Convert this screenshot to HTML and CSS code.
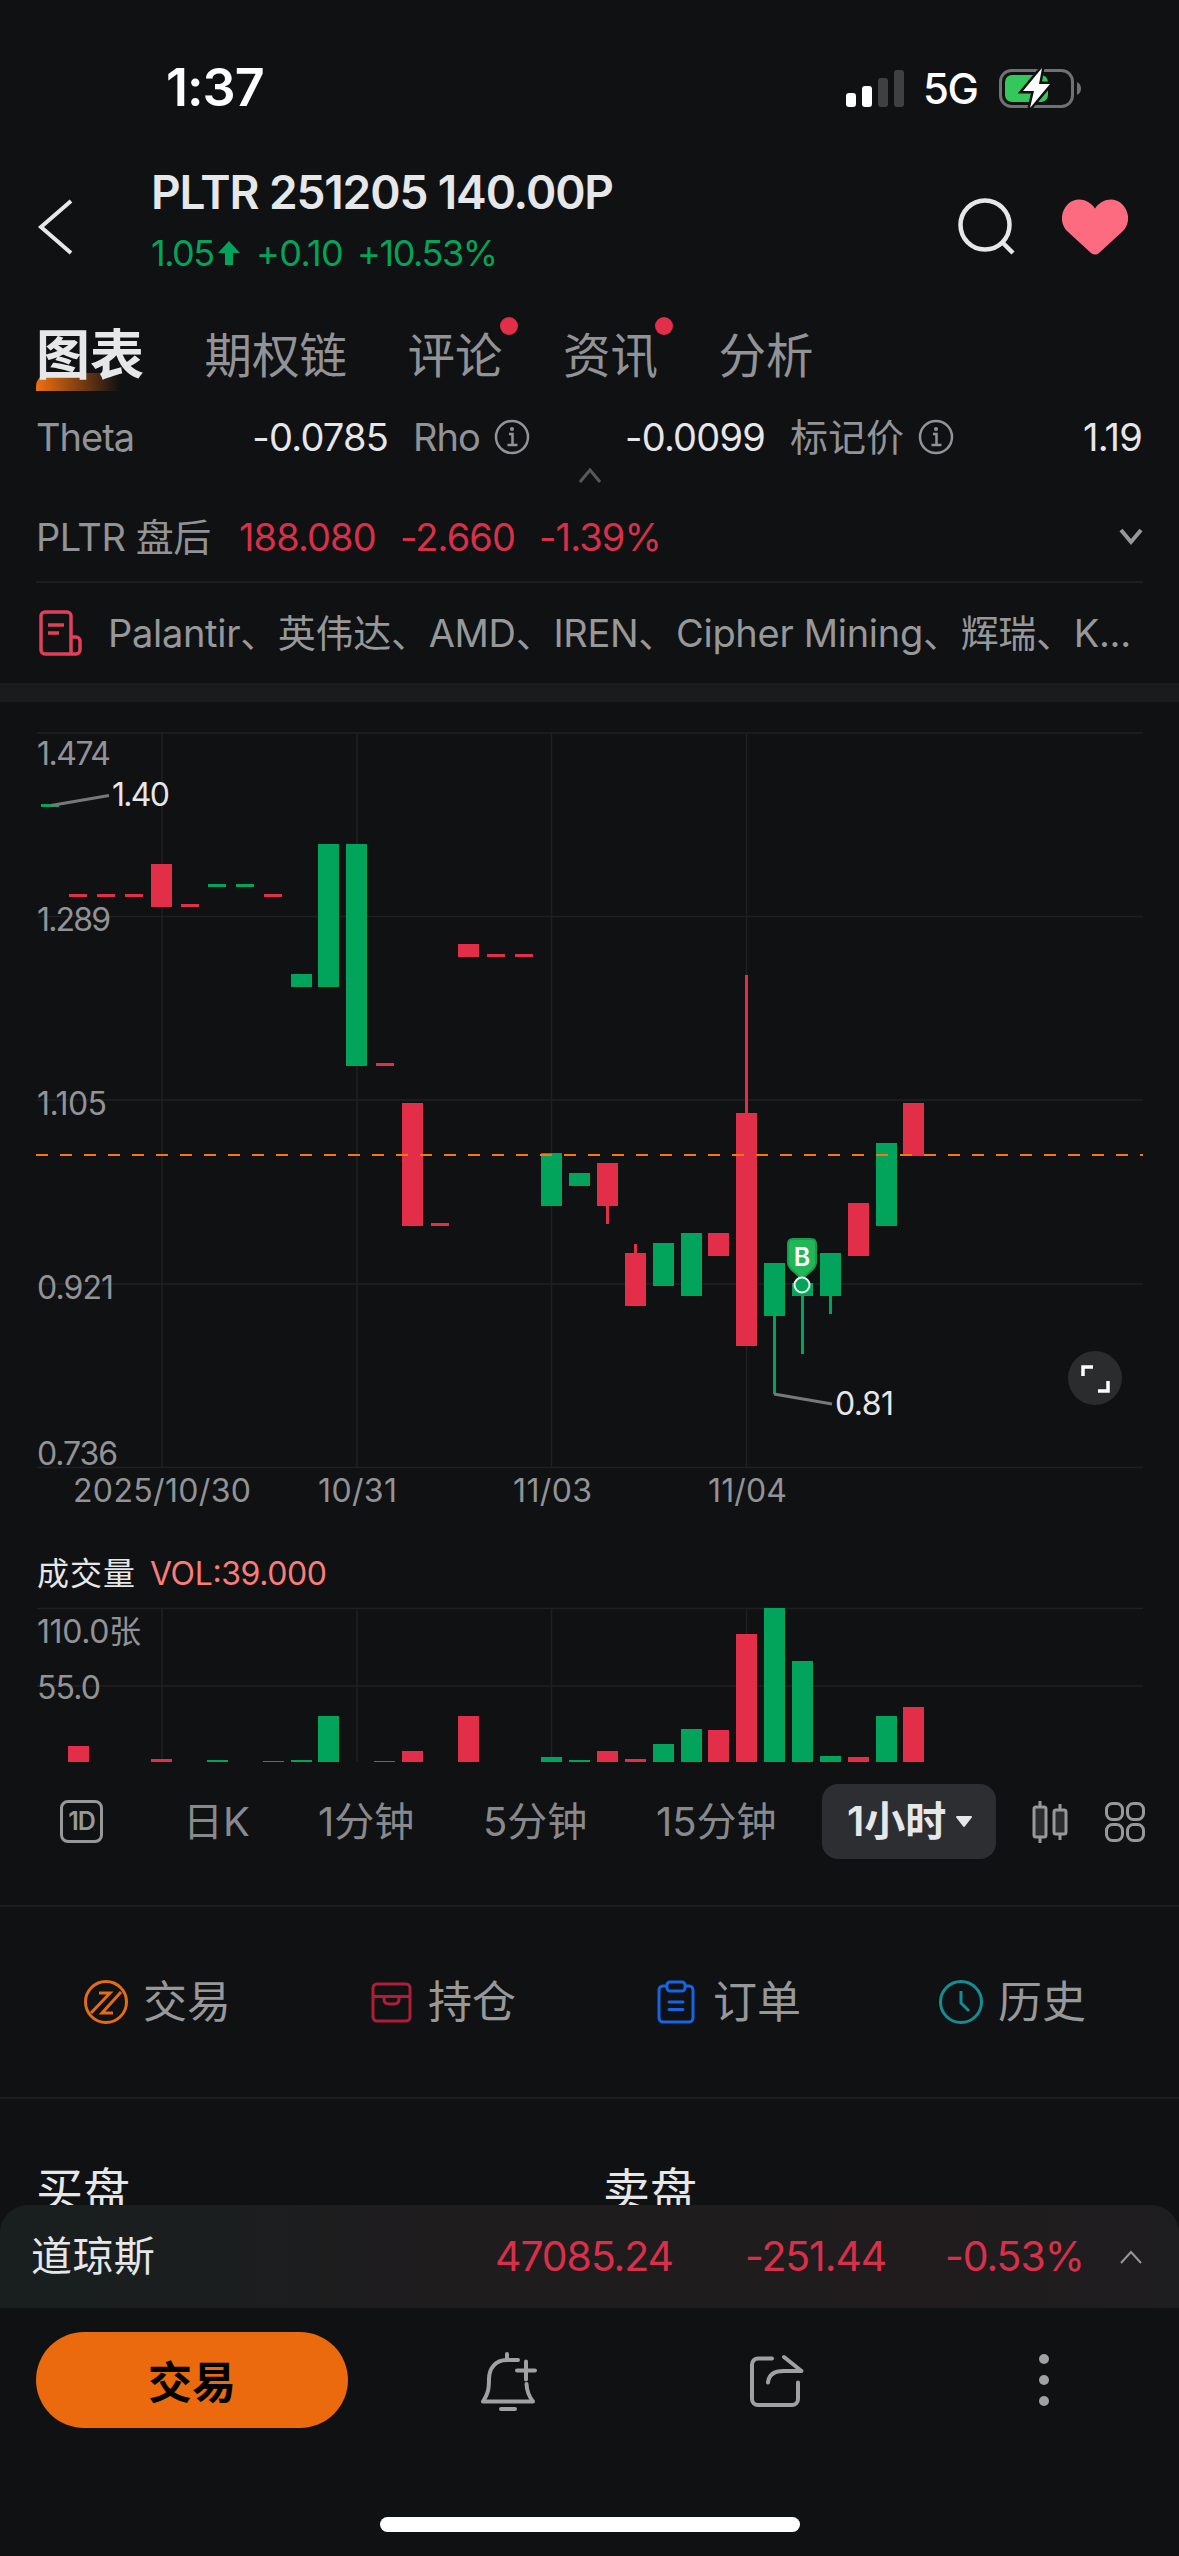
FILE: index.html
```html
<!DOCTYPE html>
<html lang="zh">
<head>
  <meta charset="utf-8">
  <title>PLTR 251205 140.00P</title>
  <link rel="stylesheet" href="styles.css">
</head>
<body>
  <div class="status-bar">
    <span class="time">1:37</span>
    <div class="status-icons">
      <svg width="58" height="38" viewBox="0 0 58 38">
        <rect x="0" y="24" width="10" height="14" rx="3" fill="#fff"/>
        <rect x="16" y="17" width="10" height="21" rx="3" fill="#fff"/>
        <rect x="32" y="9" width="10" height="29" rx="3" fill="#3f4042"/>
        <rect x="48" y="1" width="10" height="37" rx="3" fill="#3f4042"/>
      </svg>
      <span class="network">5G</span>
      <svg width="83" height="44" viewBox="0 0 83 44">
        <rect x="1.5" y="4.5" width="72" height="36" rx="11" fill="none" stroke="#707173" stroke-width="3"/>
        <path d="M78 16q4 2 4 6.500t-4 6.500z" fill="#707173"/>
        <rect x="6" y="9" width="43" height="27" rx="7" fill="#34c759"/>
        <path d="M43 2 L24 25 H35 L31 42 L51 18 H40 Z" fill="#fff" stroke="#101113" stroke-width="5" paint-order="stroke"/>
      </svg>
    </div>
  </div>

  <header class="header">
    <svg class="back" width="40" height="60" viewBox="0 0 40 60"><path d="M35 4 L5 30 L35 56" fill="none" stroke="#e6e7e9" stroke-width="4"/></svg>
    <div class="quote">
      <h1>PLTR 251205 140.00P</h1>
      <p class="change">
        <span class="last">1.05</span>
        <svg width="22" height="24" viewBox="0 0 22 24"><path d="M11 0 L22 12 H15 V24 H7 V12 H0 Z" fill="#02a35a"/></svg>
        <span class="diff">+0.10</span>
        <span class="pct">+10.53%</span>
      </p>
    </div>
    <svg class="search" width="60" height="60" viewBox="0 0 60 60"><circle cx="28" cy="28" r="24.500" fill="none" stroke="#e6e7e9" stroke-width="4.500"/><path d="M45 45 L56 56" stroke="#e6e7e9" stroke-width="4.500"/></svg>
    <svg class="heart" width="66" height="56" viewBox="0 0 66 56"><path d="M33 9.500C26 -1 13-2 6 5C-2 13-2 25 5 32L29 54Q33 57 37 54L61 32C68 25 68 13 60 5C53-2 40-1 33 9.500Z" fill="#fc6b80"/></svg>
  </header>

  <nav class="tabs">
    <a class="tab active">图表</a>
    <a class="tab">期权链</a>
    <a class="tab dot">评论</a>
    <a class="tab dot">资讯</a>
    <a class="tab">分析</a>
  </nav>

  <section class="greeks">
    <div class="greek"><span class="label latin">Theta</span><span class="value">-0.0785</span></div>
    <div class="greek"><span class="label latin">Rho</span>
      <svg class="info" width="36" height="36" viewBox="0 0 36 36"><g fill="none" stroke="#929396" stroke-width="2.500"><circle cx="18" cy="18" r="16"/><path d="M15 15h3.500v11M13.500 26h10"/></g><circle cx="18" cy="10" r="2" fill="#929396"/></svg>
      <span class="value">-0.0099</span></div>
    <div class="greek"><span class="label">标记价</span>
      <svg class="info" width="36" height="36" viewBox="0 0 36 36"><g fill="none" stroke="#929396" stroke-width="2.500"><circle cx="18" cy="18" r="16"/><path d="M15 15h3.500v11M13.500 26h10"/></g><circle cx="18" cy="10" r="2" fill="#929396"/></svg>
      <span class="value">1.19</span></div>
  </section>
  <div class="collapse">
    <svg width="22" height="16" viewBox="0 0 22 16"><path d="M1 14 L11 2 L21 14" fill="none" stroke="#57585a" stroke-width="3"/></svg>
  </div>

  <section class="underlying">
    <span class="label">PLTR 盘后</span>
    <span class="down u-price">188.080</span>
    <span class="down u-diff">-2.660</span>
    <span class="down u-pct">-1.39%</span>
    <svg class="caret" width="24" height="18" viewBox="0 0 24 18"><path d="M2 2 L12 14 L22 2" fill="none" stroke="#97989a" stroke-width="4"/></svg>
  </section>

  <section class="news">
    <svg width="44" height="46" viewBox="0 0 44 46"><g fill="none" stroke="#e0405a" stroke-width="3.500"><path d="M32 44H6a4 4 0 0 1-4-4V6a4 4 0 0 1 4-4H28a4 4 0 0 1 4 4V44H37a4 4 0 0 0 4-4V31a4 4 0 0 0-4-4H32"/><path d="M9 15H25M9 23H20"/></g></svg>
    <p>Palantir、英伟达、AMD、IREN、Cipher Mining、辉瑞、K...</p>
  </section>

  <main class="chart">
    <svg id="chart" width="1179" height="1060" viewBox="0 702 1179 1060">
      <g id="grid" stroke="#1f2022" stroke-width="1.500"></g>
      <g id="candles"></g>
      <g id="volume"></g>
      <path d="M36 1155H1143" stroke="#f5780f" stroke-width="2" stroke-dasharray="12 12"/>
      <g stroke="#77787a" stroke-width="3"><path d="M51 805.500L109 795.500M774 1394L832 1404"/></g>
      <g class="axis">
        <text x="37" y="765" textLength="74">1.474</text>
        <text x="37" y="931" textLength="74">1.289</text>
        <text x="37" y="1115" textLength="70">1.105</text>
        <text x="37" y="1299" textLength="77">0.921</text>
        <text x="37" y="1465" textLength="81">0.736</text>
        <text x="73" y="1502" textLength="178">2025/10/30</text>
        <text x="318" y="1502" textLength="79">10/31</text>
        <text x="513" y="1502" textLength="79">11/03</text>
        <text x="708" y="1502" textLength="79">11/04</text>
        <text x="37" y="1643" textLength="104">110.0张</text>
        <text x="37" y="1699" textLength="64">55.0</text>
      </g>
      <g class="marks">
        <text x="112" y="806" textLength="58">1.40</text>
        <text x="835" y="1415" textLength="59">0.81</text>
      </g>
      <text class="vol-title" x="37" y="1585" textLength="98">成交量</text>
      <text class="vol-value" x="150" y="1585" textLength="177">VOL:39.000</text>
      <path d="M793 1239H811Q816 1239 816 1244V1263Q816 1266 813 1269L802 1279L791 1269Q788 1266 788 1263V1244Q788 1239 793 1239Z" fill="#22b659" stroke="#13a04d" stroke-width="2"/>
      <text class="buy" x="802" y="1266">B</text>
      <circle cx="802" cy="1285" r="7.500" fill="#02a35a" stroke="#e6f6ec" stroke-width="2"/>
      <circle cx="1095" cy="1378" r="27" fill="#2b2c2e"/>
      <path d="M1083 1376V1367H1093M1108 1381V1391H1098" fill="none" stroke="#fff" stroke-width="3.500"/>
    </svg>
  </main>

  <nav class="periods">
    <span class="one-day">1D</span>
    <a class="p-day">日K</a>
    <a class="p-1">1分钟</a>
    <a class="p-5">5分钟</a>
    <a class="p-15">15分钟</a>
    <a class="selected">1小时<svg width="18" height="12" viewBox="0 0 18 12"><path d="M2 1H16L9 10Z" fill="#e6e7e9" stroke="#e6e7e9" stroke-width="2" stroke-linejoin="round"/></svg></a>
    <svg class="candle-icon" width="36" height="48" viewBox="0 0 36 48"><g fill="#2b2c2e" stroke="#97989a" stroke-width="3"><path d="M8 3V45M28 6V42"/><rect x="2" y="9" width="12" height="30" rx="2"/><rect x="22" y="12" width="12" height="24" rx="2"/></g></svg>
    <svg class="grid-icon" width="40" height="40" viewBox="0 0 40 40"><g fill="none" stroke="#97989a" stroke-width="3"><rect x="1.500" y="1.500" width="16" height="16" rx="6"/><rect x="22.500" y="1.500" width="16" height="16" rx="6"/><rect x="1.500" y="22.500" width="16" height="16" rx="6"/><rect x="22.500" y="22.500" width="16" height="16" rx="6"/></g></svg>
  </nav>

  <section class="actions">
    <a class="action"><svg width="44" height="50" viewBox="0 -3 44 50"><g fill="none" stroke="#e46c14" stroke-width="3"><circle cx="22" cy="22" r="20.500"/><path d="M15 13H26L7 33M37 12L18 33H29"/></g></svg>交易</a>
    <a class="action"><svg width="44" height="44" viewBox="0 0 44 44"><g fill="none" stroke="#b01d38" stroke-width="3"><rect x="4" y="4" width="37" height="37" rx="4"/><path d="M4 16.500H41M15 17v2q0 5 5 5h5q5 0 5-5v-2"/></g></svg>持仓</a>
    <a class="action"><svg width="44" height="44" viewBox="0 0 44 44"><g fill="none" stroke="#1565e6" stroke-width="3"><path d="M13 6H9a4 4 0 0 0-4 4V38a4 4 0 0 0 4 4H35a4 4 0 0 0 4-4V10a4 4 0 0 0-4-4H31"/><rect x="13" y="2" width="18" height="9" rx="3"/><path d="M15 22H29M15 29.500H29" stroke-linecap="round"/></g></svg>订单</a>
    <a class="action"><svg width="44" height="44" viewBox="0 0 44 44"><g fill="none" stroke="#138f94" stroke-width="3"><circle cx="22" cy="22" r="20.500"/><path d="M22 11V23L30 31"/></g></svg>历史</a>
  </section>

  <section class="depth">
    <span>买盘</span>
    <span>卖盘</span>
  </section>

  <footer class="footer">
    <div class="index-bar">
      <span class="index-name">道琼斯</span>
      <span class="down i-price">47085.24</span>
      <span class="down i-diff">-251.44</span>
      <span class="down i-pct">-0.53%</span>
      <svg width="22" height="14" viewBox="0 0 22 14"><path d="M1 13 L11 2 L21 13" fill="none" stroke="#97989a" stroke-width="2"/></svg>
    </div>
    <div class="toolbar">
      <button class="trade">交易</button>
      <div class="tool bell"><svg width="58" height="62" viewBox="0 0 58 62"><g fill="none" stroke="#a0a1a3" stroke-width="4" stroke-linecap="round" stroke-linejoin="round"><path d="M28 5V10M39 11H28C16 11 10 20 10 30C10 40 9 45 4 52.500H54Q48 45 47.500 35M38 21.500H56M47 12.500V30.500M22 60H36"/></g></svg></div>
      <div class="tool"><svg width="58" height="58" viewBox="0 0 58 58"><g fill="none" stroke="#a0a1a3" stroke-width="4" stroke-linecap="round" stroke-linejoin="round"><path d="M25 7.500H11a6 6 0 0 0-6 6V48a6 6 0 0 0 6 6H45a6 6 0 0 0 6-6V31.500M21 31.500Q22 20 37 20H54.500L37 6"/></g></svg></div>
      <div class="tool"><svg width="12" height="54" viewBox="0 0 12 54"><g fill="#a0a1a3"><circle cx="6" cy="6" r="5"/><circle cx="6" cy="27" r="5"/><circle cx="6" cy="48" r="5"/></g></svg></div>
    </div>
    <div class="home-indicator"></div>
  </footer>

  <script src="chart.js"></script>
</body>
</html>
```
FILE: styles.css
```css
* {
  box-sizing: border-box;
}

body {
  margin: 0;
  width: 1179px;
  height: 2556px;
  overflow: hidden;
  display: flex;
  flex-direction: column;
  background: #101113;
  color: #e6e7e9;
  font-family: Inter, "Noto Sans CJK SC", sans-serif;
  font-size: 38px;
  line-height: 1;
}

svg {
  display: block;
  flex: none;
}

h1, p {
  margin: 0;
}

span, a {
  white-space: nowrap;
}

.down {
  color: #d9304a;
}

.status-bar {
  height: 166px;
  padding: 9px 97px 0 166px;
  display: flex;
  align-items: center;
  justify-content: space-between;
  color: #fff;
}

.time {
  font-size: 52px;
  font-weight: 600;
  letter-spacing: -1px;
}

.status-icons {
  display: flex;
  align-items: center;
}

.network {
  margin: 0 21px 0 19px;
  padding-top: 3px;
  width: 55px;
  font-size: 42px;
  font-weight: 500;
  letter-spacing: -1.5px;
}

.header {
  height: 134px;
  padding-left: 36px;
  display: flex;
}

.back {
  margin-top: 31px;
}

.quote {
  width: 803px;
  padding: 1px 0 0 75px;
}

h1 {
  font-size: 46px;
  font-weight: 600;
  letter-spacing: -1.1px;
  line-height: 50px;
}

.change {
  display: flex;
  align-items: center;
  margin-top: 18px;
  color: #02a35a;
  font-size: 36px;
}

.last {
  width: 67px;
  letter-spacing: -1.5px;
}

.diff {
  margin-left: 16px;
  width: 101px;
  letter-spacing: -0.6px;
}

.pct {
  letter-spacing: -1.4px;
}

.search {
  margin: 31px 0 0 78px;
}

.heart {
  margin: 33px 0 0 45px;
}

.tabs {
  height: 106px;
  padding: 26px 36px 0;
  display: flex;
  gap: 60.5px;
  font-size: 47.5px;
  line-height: 60px;
  color: #929396;
}

.tab {
  position: relative;
}

.tab.active {
  font-size: 54px;
  font-weight: 700;
  color: #e6e7e9;
  z-index: 0;
}

.tab.active::before {
  content: "";
  position: absolute;
  z-index: -1;
  left: 0;
  top: 47px;
  width: 84px;
  height: 18px;
  border-radius: 14px 0 0 0;
  background: linear-gradient(90deg, #f07010, rgba(240, 112, 16, 0));
}

.tab.dot::after {
  content: "";
  position: absolute;
  right: -15px;
  top: -9px;
  width: 18px;
  height: 18px;
  border-radius: 50%;
  background: #e22e48;
}

.greeks {
  height: 62px;
  padding: 0 36px;
  display: grid;
  grid-template-columns: 352px 352px 352px;
  column-gap: 25px;
}

.greek {
  display: flex;
  align-items: center;
}

.label {
  color: #929396;
}

.latin {
  letter-spacing: -1px;
}

.info {
  margin-left: 14px;
}

.value {
  margin-left: auto;
  letter-spacing: -0.8px;
}

.collapse {
  height: 24px;
  padding-left: 579px;
}

.underlying {
  height: 91px;
  margin: 0 36px;
  display: flex;
  align-items: center;
  border-bottom: 2px solid #1d1e20;
  letter-spacing: -0.9px;
}

.underlying .label {
  width: 176px;
  letter-spacing: -0.4px;
}

.u-price {
  margin-left: 27px;
  width: 161px;
}

.u-diff {
  width: 139px;
}

.caret {
  margin-left: auto;
}

.news {
  height: 100px;
  padding: 0 36px 0 39px;
  display: flex;
  align-items: center;
  color: #97989a;
}

.news p {
  margin-left: 25px;
  white-space: nowrap;
  letter-spacing: -0.3px;
}

.chart {
  height: 1081px;
  border-top: 19px solid #1a1b1d;
}

.axis text {
  font-size: 32px;
  fill: #929396;
}

.marks text {
  font-size: 32px;
  fill: #e6e7e9;
}

.vol-title {
  font-size: 32px;
  fill: #e6e7e9;
}

.vol-value {
  font-size: 32px;
  fill: #fa7d79;
}

.buy {
  font-size: 25px;
  font-weight: 600;
  fill: #fff;
  text-anchor: middle;
}

.periods {
  height: 143px;
  padding-left: 60px;
  display: flex;
  align-items: center;
  padding-bottom: 26px;
  border-bottom: 2px solid #1d1e20;
  font-size: 40px;
  color: #88898d;
}

.one-day {
  width: 43px;
  height: 43px;
  border: 3px solid #97989a;
  border-radius: 8px;
  font-size: 25px;
  font-weight: 600;
  line-height: 36px;
  text-align: center;
  letter-spacing: -1px;
  color: #97989a;
}

.p-day {
  width: 135px;
  margin-left: 80px;
}

.p-1 {
  width: 165px;
}

.p-5 {
  width: 173px;
}

.p-15 {
  width: 166px;
}

.selected {
  width: 174px;
  height: 75px;
  padding-left: 25px;
  display: flex;
  align-items: center;
  gap: 9px;
  border-radius: 16px;
  background: #2c2e32;
  color: #e6e7e9;
  font-size: 41px;
  font-weight: 600;
}

.candle-icon {
  margin-left: 36px;
}

.grid-icon {
  margin-left: 37px;
}

.actions {
  height: 192px;
  padding-left: 84px;
  display: grid;
  grid-template-columns: repeat(4, 285px);
  border-bottom: 2px solid #1d1e20;
  font-size: 44px;
  color: #97989a;
}

.action {
  display: flex;
  align-items: center;
  gap: 15px;
}

.depth {
  height: 106px;
  padding: 67px 36px 0;
  display: grid;
  grid-template-columns: 567px 1fr;
  font-size: 47px;
  overflow: hidden;
}

.footer {
  flex: 1;
  background: #101113;
}

.index-bar {
  height: 103px;
  padding-left: 31px;
  display: flex;
  align-items: center;
  border-radius: 28px 28px 0 0;
  background: linear-gradient(90deg, #191e1f 0%, #1b1e1f 20%, #1f1c1e 35%, #201c1e 80%, #1e1d1f 100%);
  font-size: 41px;
  letter-spacing: -1.1px;
}

.index-name {
  width: 124px;
  letter-spacing: 0.4px;
}

.i-price {
  margin-left: 340px;
  width: 250px;
}

.i-diff {
  width: 200px;
}

.i-pct {
  width: 175px;
}

.toolbar {
  padding: 24px 0 0 36px;
  display: flex;
}

.trade {
  width: 312px;
  height: 96px;
  border: none;
  border-radius: 48px;
  background: #ea6a0d;
  color: #000;
  font: 700 44px Inter, "Noto Sans CJK SC", sans-serif;
}

.tool {
  width: 268px;
  height: 96px;
  display: flex;
  align-items: center;
  justify-content: center;
}

.bell {
  margin-left: 26px;
}

.home-indicator {
  width: 420px;
  height: 15px;
  margin: 89px 0 0 380px;
  border-radius: 8px;
  background: #fff;
}
```
FILE: chart.js
```js
const UP = '#02a35a';
const DOWN = '#e22e48';
const STEP = 27.86;
const FIRST = 50.3;

// [slot, color, bodyTop, bodyBottom, wickTop, wickBottom]
const candles = [
  [0, UP, 804, 807], [1, DOWN, 894, 897], [2, DOWN, 894, 897], [3, DOWN, 894, 897],
  [4, DOWN, 864, 907], [5, DOWN, 904, 907], [6, UP, 884, 887], [7, UP, 884, 887],
  [8, DOWN, 894, 897], [9, UP, 974, 987], [10, UP, 844, 987], [11, UP, 844, 1066],
  [12, DOWN, 1063, 1066], [13, DOWN, 1103, 1226], [14, DOWN, 1223, 1226],
  [15, DOWN, 944, 957], [16, DOWN, 954, 957], [17, DOWN, 954, 957],
  [18, UP, 1153, 1206], [19, UP, 1173, 1186], [20, DOWN, 1163, 1206, 1163, 1224],
  [21, DOWN, 1253, 1306, 1244, 1306], [22, UP, 1243, 1286], [23, UP, 1233, 1296],
  [24, DOWN, 1233, 1256], [25, DOWN, 1113, 1346, 975, 1346],
  [26, UP, 1263, 1316, 1263, 1394], [27, UP, 1283, 1296, 1283, 1354],
  [28, UP, 1253, 1296, 1253, 1314], [29, DOWN, 1203, 1256],
  [30, UP, 1143, 1226], [31, DOWN, 1103, 1156]
];

// [slot, color, bar top]
const volumes = [
  [1, DOWN, 1746], [4, DOWN, 1759], [6, UP, 1760], [8, DOWN, 1761], [9, UP, 1760],
  [10, UP, 1716], [12, DOWN, 1761], [13, DOWN, 1751], [15, DOWN, 1716], [18, UP, 1757],
  [19, UP, 1760], [20, DOWN, 1751], [21, DOWN, 1759], [22, UP, 1744], [23, UP, 1729],
  [24, DOWN, 1730], [25, DOWN, 1634], [26, UP, 1608], [27, UP, 1661], [28, UP, 1756],
  [29, DOWN, 1757], [30, UP, 1716], [31, DOWN, 1707]
];

function add(parent, tag, attrs) {
  const el = document.createElementNS('http://www.w3.org/2000/svg', tag);
  for (const key in attrs) el.setAttribute(key, attrs[key]);
  document.getElementById(parent).appendChild(el);
}

[733, 916.5, 1100, 1284, 1467.5, 1608.5, 1686].forEach(y => add('grid', 'path', { d: `M37 ${y}H1143` }));
[162, 357, 551.5, 746.5].forEach(x => add('grid', 'path', { d: `M${x} 733V1467M${x} 1608V1762` }));

candles.forEach(([i, color, top, bottom, wickTop, wickBottom]) => {
  const w = bottom - top < 5 ? 18 : 21;
  const x = Math.round(FIRST + i * STEP - w / 2);
  add('candles', 'rect', { x, y: top, width: w, height: bottom - top, fill: color });
  if (wickTop) add('candles', 'rect', { x: x + 9, y: wickTop, width: 3, height: wickBottom - wickTop, fill: color });
});

volumes.forEach(([i, color, top]) => {
  add('volume', 'rect', { x: Math.round(FIRST + i * STEP - 10.5), y: top, width: 21, height: 1762 - top, fill: color });
});
```
